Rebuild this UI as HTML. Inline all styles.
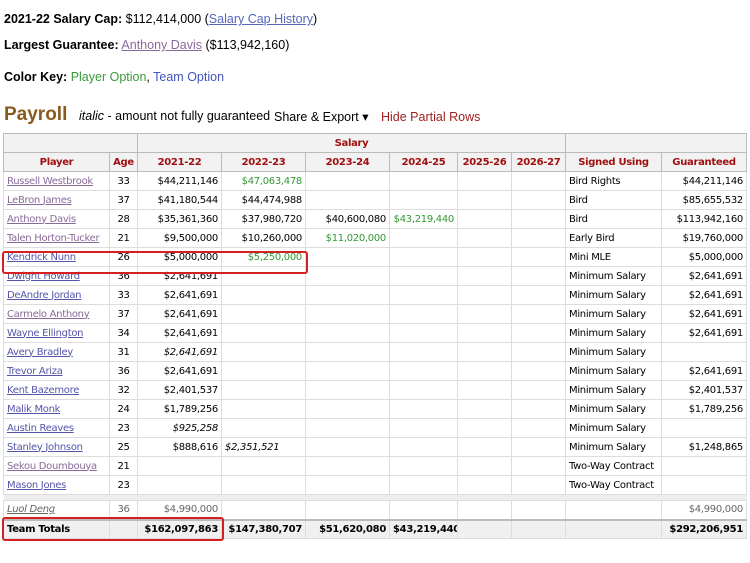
<!DOCTYPE html>
<html><head><meta charset="utf-8"><style>
body{margin:0;background:#fff;font-family:"Liberation Sans",Arial,sans-serif;color:#000;width:750px;height:563px;overflow:hidden;position:relative}
.t{position:absolute;font-size:12.5px;left:4px}
b{font-weight:bold}
a{color:#55a;text-decoration:underline}
.pv{color:#8a6a9a}
table{position:absolute;left:3px;top:133px;width:743px;border-collapse:collapse;table-layout:fixed;font-family:"DejaVu Sans",Verdana,sans-serif;font-size:10px;letter-spacing:-0.3px}
td,th{border:1px solid #ddd;height:19px;padding:0 3px;white-space:nowrap;overflow:hidden;box-sizing:border-box}
th{background:#f2f2f2;color:#a01010;font-weight:bold;text-align:center;border-color:#bbb}
td{text-align:right}
td.l{text-align:left}
td.c{text-align:center}
.g{color:#339933}
i{font-style:italic}
tr.tot td{background:#f0f0f0;font-weight:bold;border-top:2px solid #bbb}
tr.sp td{height:6px;background:#eee;border-left:none;border-right:none}
.box{position:absolute;border:2px solid #d42020;border-radius:3px}
</style></head><body>
<div class="t" style="top:12px"><b>2021-22 Salary Cap:</b> $112,414,000 (<a href="#" style="color:#5566bb">Salary Cap History</a>)</div>
<div class="t" style="top:38px"><b>Largest Guarantee:</b> <a href="#" class="pv">Anthony Davis</a> ($113,942,160)</div>
<div class="t" style="top:70px"><b>Color Key:</b> <span style="color:#3a9a3a">Player Option</span>, <span style="color:#4455bb">Team Option</span></div>
<div style="position:absolute;left:4px;top:104px;font-size:19px;font-weight:bold;color:#8a5a1a">Payroll</div>
<div style="position:absolute;left:79px;top:109px;font-size:12.5px"><i>italic</i> - amount not fully guaranteed</div>
<div style="position:absolute;left:274px;top:109px;font-size:12.5px">Share &amp; Export ▾</div>
<div style="position:absolute;left:381px;top:110px;font-size:12.5px;color:#a02020">Hide Partial Rows</div>
<table>
<colgroup><col style="width:106px"><col style="width:28px"><col style="width:84px"><col style="width:84px"><col style="width:84px"><col style="width:68px"><col style="width:54px"><col style="width:54px"><col style="width:96px"><col style="width:85px"></colgroup>
<tr><th colspan="2"></th><th colspan="6">Salary</th><th colspan="2"></th></tr>
<tr><th>Player</th><th>Age</th><th>2021-22</th><th>2022-23</th><th>2023-24</th><th>2024-25</th><th>2025-26</th><th>2026-27</th><th>Signed Using</th><th>Guaranteed</th></tr>
<tr><td class="l"><a class="pv">Russell Westbrook</a></td><td class="c">33</td><td>$44,211,146</td><td class="g">$47,063,478</td><td></td><td></td><td></td><td></td><td class="l">Bird Rights</td><td>$44,211,146</td></tr>
<tr><td class="l"><a class="pv">LeBron James</a></td><td class="c">37</td><td>$41,180,544</td><td>$44,474,988</td><td></td><td></td><td></td><td></td><td class="l">Bird</td><td>$85,655,532</td></tr>
<tr><td class="l"><a class="pv">Anthony Davis</a></td><td class="c">28</td><td>$35,361,360</td><td>$37,980,720</td><td>$40,600,080</td><td class="g">$43,219,440</td><td></td><td></td><td class="l">Bird</td><td>$113,942,160</td></tr>
<tr><td class="l"><a class="pv">Talen Horton-Tucker</a></td><td class="c">21</td><td>$9,500,000</td><td>$10,260,000</td><td class="g">$11,020,000</td><td></td><td></td><td></td><td class="l">Early Bird</td><td>$19,760,000</td></tr>
<tr><td class="l"><a>Kendrick Nunn</a></td><td class="c">26</td><td>$5,000,000</td><td class="g">$5,250,000</td><td></td><td></td><td></td><td></td><td class="l">Mini MLE</td><td>$5,000,000</td></tr>
<tr><td class="l"><a>Dwight Howard</a></td><td class="c">36</td><td>$2,641,691</td><td></td><td></td><td></td><td></td><td></td><td class="l">Minimum Salary</td><td>$2,641,691</td></tr>
<tr><td class="l"><a>DeAndre Jordan</a></td><td class="c">33</td><td>$2,641,691</td><td></td><td></td><td></td><td></td><td></td><td class="l">Minimum Salary</td><td>$2,641,691</td></tr>
<tr><td class="l"><a class="pv">Carmelo Anthony</a></td><td class="c">37</td><td>$2,641,691</td><td></td><td></td><td></td><td></td><td></td><td class="l">Minimum Salary</td><td>$2,641,691</td></tr>
<tr><td class="l"><a>Wayne Ellington</a></td><td class="c">34</td><td>$2,641,691</td><td></td><td></td><td></td><td></td><td></td><td class="l">Minimum Salary</td><td>$2,641,691</td></tr>
<tr><td class="l"><a>Avery Bradley</a></td><td class="c">31</td><td><i>$2,641,691</i></td><td></td><td></td><td></td><td></td><td></td><td class="l">Minimum Salary</td><td></td></tr>
<tr><td class="l"><a>Trevor Ariza</a></td><td class="c">36</td><td>$2,641,691</td><td></td><td></td><td></td><td></td><td></td><td class="l">Minimum Salary</td><td>$2,641,691</td></tr>
<tr><td class="l"><a>Kent Bazemore</a></td><td class="c">32</td><td>$2,401,537</td><td></td><td></td><td></td><td></td><td></td><td class="l">Minimum Salary</td><td>$2,401,537</td></tr>
<tr><td class="l"><a>Malik Monk</a></td><td class="c">24</td><td>$1,789,256</td><td></td><td></td><td></td><td></td><td></td><td class="l">Minimum Salary</td><td>$1,789,256</td></tr>
<tr><td class="l"><a>Austin Reaves</a></td><td class="c">23</td><td><i>$925,258</i></td><td></td><td></td><td></td><td></td><td></td><td class="l">Minimum Salary</td><td></td></tr>
<tr><td class="l"><a>Stanley Johnson</a></td><td class="c">25</td><td>$888,616</td><td style="text-align:left"><i>$2,351,521</i></td><td></td><td></td><td></td><td></td><td class="l">Minimum Salary</td><td>$1,248,865</td></tr>
<tr><td class="l"><a class="pv">Sekou Doumbouya</a></td><td class="c">21</td><td></td><td></td><td></td><td></td><td></td><td></td><td class="l">Two-Way Contract</td><td></td></tr>
<tr><td class="l"><a>Mason Jones</a></td><td class="c">23</td><td></td><td></td><td></td><td></td><td></td><td></td><td class="l">Two-Way Contract</td><td></td></tr>
<tr class="sp"><td colspan="10"></td></tr>
<tr style="color:#666"><td class="l"><a style="color:#666"><i>Luol Deng</i></a></td><td class="c">36</td><td>$4,990,000</td><td></td><td></td><td></td><td></td><td></td><td></td><td>$4,990,000</td></tr>
<tr class="tot"><td class="l">Team Totals</td><td></td><td>$162,097,863</td><td>$147,380,707</td><td>$51,620,080</td><td>$43,219,440</td><td></td><td></td><td></td><td>$292,206,951</td></tr>
</table>
<div class="box" style="left:2px;top:251px;width:302px;height:19px"></div>
<div class="box" style="left:2px;top:517px;width:218px;height:20px"></div>
</body></html>
